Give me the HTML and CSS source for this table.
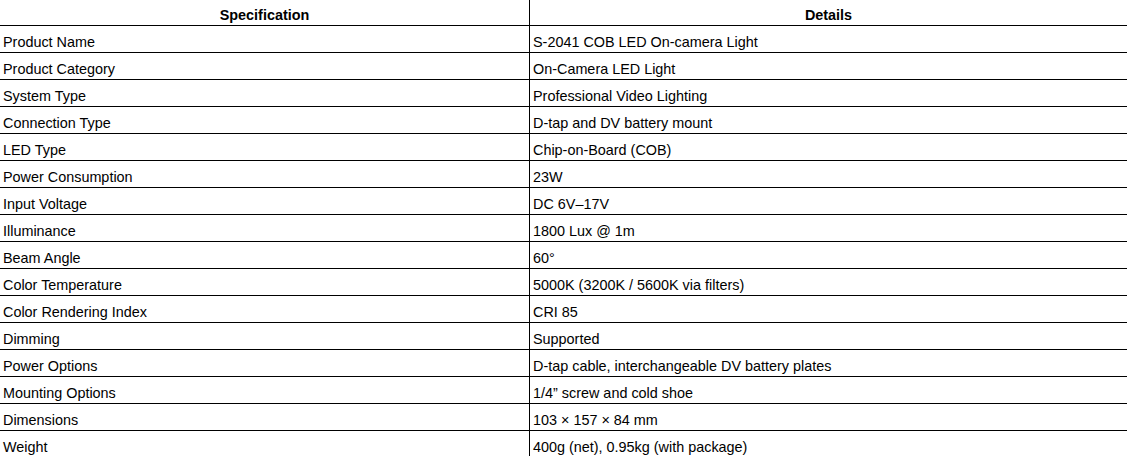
FILE: index.html
```html
<!DOCTYPE html>
<html>
<head>
<meta charset="utf-8">
<link rel="stylesheet" href="styles.css">
</head>
<body>
<table class="spec">
<thead>
<tr><th class="c1">Specification</th><th class="c2">Details</th></tr>
</thead>
<tbody>
<tr><td class="c1">Product Name</td><td class="c2">S-2041 COB LED On-camera Light</td></tr>
<tr><td class="c1">Product Category</td><td class="c2">On-Camera LED Light</td></tr>
<tr><td class="c1">System Type</td><td class="c2">Professional Video Lighting</td></tr>
<tr><td class="c1">Connection Type</td><td class="c2">D-tap and DV battery mount</td></tr>
<tr><td class="c1">LED Type</td><td class="c2">Chip-on-Board (COB)</td></tr>
<tr><td class="c1">Power Consumption</td><td class="c2">23W</td></tr>
<tr><td class="c1">Input Voltage</td><td class="c2">DC 6V–17V</td></tr>
<tr><td class="c1">Illuminance</td><td class="c2">1800 Lux @ 1m</td></tr>
<tr><td class="c1">Beam Angle</td><td class="c2">60°</td></tr>
<tr><td class="c1">Color Temperature</td><td class="c2">5000K (3200K / 5600K via filters)</td></tr>
<tr><td class="c1">Color Rendering Index</td><td class="c2">CRI 85</td></tr>
<tr><td class="c1">Dimming</td><td class="c2">Supported</td></tr>
<tr><td class="c1">Power Options</td><td class="c2">D-tap cable, interchangeable DV battery plates</td></tr>
<tr><td class="c1">Mounting Options</td><td class="c2">1/4” screw and cold shoe</td></tr>
<tr><td class="c1">Dimensions</td><td class="c2">103 × 157 × 84 mm</td></tr>
<tr><td class="c1">Weight</td><td class="c2">400g (net), 0.95kg (with package)</td></tr>
</tbody>
</table>
</body>
</html>
```
FILE: styles.css
```css
html, body {
  margin: 0;
  padding: 0;
  background: #fff;
}
.spec {
  border-collapse: collapse;
  width: 1127px;
  table-layout: fixed;
  font-family: "Liberation Sans", Arial, sans-serif;
  font-size: 14.4px;
  color: #000;
}
.spec th, .spec td {
  padding: 8px 3px 1px;
  border-bottom: 1px solid #000;
  text-align: left;
  vertical-align: top;
  line-height: 17px;
  white-space: nowrap;
}
.spec th {
  text-align: center;
  font-weight: bold;
  padding: 7px 3px 1px;
}
.spec .c1 {
  width: 523px;
  border-right: 1px solid #000;
}
```
